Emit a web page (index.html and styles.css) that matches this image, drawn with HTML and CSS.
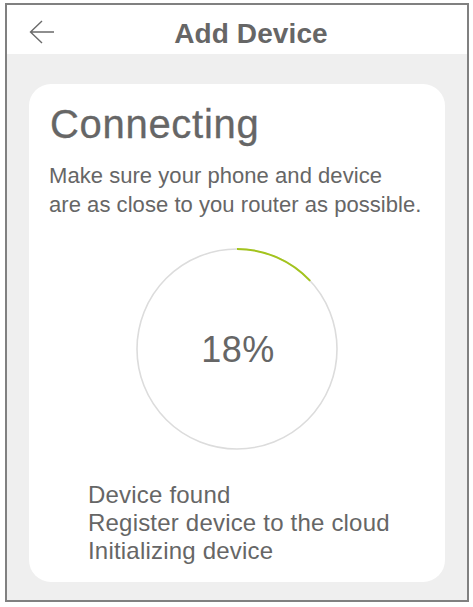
FILE: index.html
```html
<!DOCTYPE html>
<html>
<head>
<meta charset="utf-8">
<link rel="stylesheet" href="styles.css">
</head>
<body>
<div class="frame">
  <header class="header">
    <svg class="back" width="25" height="24" viewBox="0 0 25 24">
      <path d="M25 12H1.5M13 1L1.5 12L13 23" fill="none" stroke="#6a6a6a" stroke-width="1.4"/>
    </svg>
    <h1 class="title">Add Device</h1>
  </header>
  <main class="content">
    <section class="card">
      <h2 class="heading">Connecting</h2>
      <p class="desc">Make sure your phone and device<br>are as close to you router as possible.</p>
      <div class="progress">
        <svg class="ring" width="202" height="202" viewBox="0 0 202 202">
          <circle cx="101" cy="101" r="100" fill="none" stroke="#dcdcdc" stroke-width="1.6"/>
          <circle cx="101" cy="101" r="100" fill="none" stroke="#a3c41c" stroke-width="2" stroke-dasharray="82 600" transform="rotate(-90 101 101)"/>
        </svg>
        <div class="percent">18%</div>
      </div>
      <ul class="steps">
        <li>Device found</li>
        <li>Register device to the cloud</li>
        <li>Initializing device</li>
      </ul>
    </section>
  </main>
</div>
</body>
</html>
```
FILE: styles.css
```css
* { box-sizing: border-box; }
html, body { margin: 0; padding: 0; background: #fff; }
body { font-family: "Liberation Sans", Arial, sans-serif; color: #666; }

.frame {
  margin: 3px 0 0 5px;
  width: 464px;
  height: 599px;
  border: 2px solid #808080;
  display: flex;
  flex-direction: column;
  background: #efefef;
}

.header {
  height: 49px;
  background: #fff;
  display: flex;
  align-items: center;
  flex: none;
}
.back { margin-left: 22px; margin-top: 4px; flex: none; }
.title {
  flex: 1;
  margin: 0;
  padding: 8px 19px 0 0;
  text-align: center;
  font-size: 28px;
  line-height: 32px;
  font-weight: bold;
  color: #666;
  letter-spacing: 0.1px;
}

.content {
  flex: 1;
  display: flex;
  flex-direction: column;
  padding: 30px 22px 18px 22px;
}

.card {
  flex: 1;
  background: #fff;
  border-radius: 22px;
  padding: 17px 20px 0 20px;
  display: flex;
  flex-direction: column;
}

.heading {
  margin: 0 0 14px 1px;
  font-size: 40px;
  line-height: 46px;
  font-weight: normal;
  letter-spacing: 0.7px;
  color: #666;
  -webkit-text-stroke: 0.3px #666;
}

.desc {
  margin: 0;
  font-size: 22px;
  line-height: 29px;
  letter-spacing: 0.05px;
  color: #666;
}

.progress {
  margin-top: 29px;
  align-self: center;
  display: grid;
  place-items: center;
}
.ring, .percent { grid-area: 1 / 1; }
.percent {
  font-size: 36px;
  line-height: 40px;
  margin-top: 1px;
  margin-left: 2px;
  letter-spacing: 0.5px;
  color: #666;
}

.steps {
  list-style: none;
  margin: 31px 0 0 39px;
  padding: 0;
  font-size: 24px;
  line-height: 28px;
  letter-spacing: 0.2px;
  color: #666;
}
```
